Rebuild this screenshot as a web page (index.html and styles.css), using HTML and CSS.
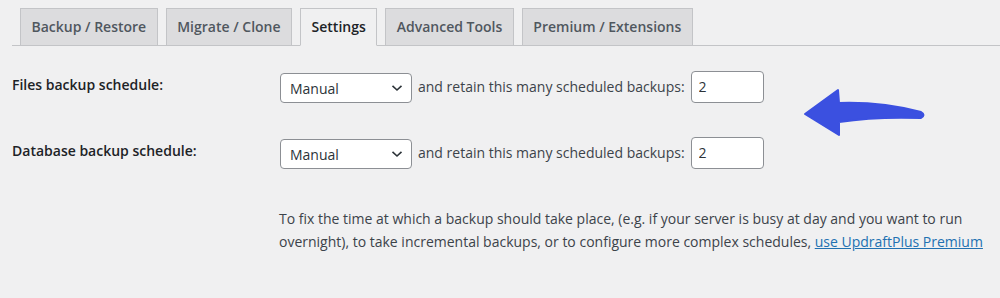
FILE: index.html
```html
<!DOCTYPE html>
<html lang="en">
<head>
  <meta charset="UTF-8">
  <meta name="viewport" content="width=device-width, initial-scale=1.0">
  <title>UpdraftPlus Settings</title>
  <link rel="stylesheet" href="styles.css">
</head>
<body>

  <div class="wrap">
    <!-- Tabs -->
    <nav class="nav-tabs">
      <a class="nav-tab" href="#">Backup / Restore</a>
      <a class="nav-tab" href="#">Migrate / Clone</a>
      <a class="nav-tab active" href="#">Settings</a>
      <a class="nav-tab" href="#">Advanced Tools</a>
      <a class="nav-tab" href="#">Premium / Extensions</a>
    </nav>

    <div class="settings">
      <div class="row">
        <label class="row-label" for="filesSchedule">Files backup schedule:</label>
        <div class="row-controls">
          <select id="filesSchedule" class="schedule">
            <option>Manual</option>
            <option>Every 4 hours</option>
            <option>Daily</option>
            <option>Weekly</option>
          </select>
          <span class="retain">and retain this many scheduled backups:</span>
          <input type="number" class="retain-count" value="2">
        </div>
      </div>

      <div class="row">
        <label class="row-label" for="dbSchedule">Database backup schedule:</label>
        <div class="row-controls">
          <select id="dbSchedule" class="schedule">
            <option>Manual</option>
            <option>Every 4 hours</option>
            <option>Daily</option>
            <option>Weekly</option>
          </select>
          <span class="retain">and retain this many scheduled backups:</span>
          <input type="number" class="retain-count" value="2">
        </div>
      </div>

      <p class="note">
        To fix the time at which a backup should take place, (e.g. if your server is busy at day and you want to run overnight), to take incremental backups, or to configure more complex schedules, <a href="#">use UpdraftPlus Premium</a>
      </p>
    </div>

    <!-- Pointer arrow -->
    <svg class="pointer" viewBox="800 84 130 56" width="130" height="56" aria-hidden="true">
      <path d="M805 114 L838 90 L839 103 C868 102 898 106 921 112 Q926 115 921 118 C893 117 865 118 839 122 L839 135 Z"
            fill="#3b50e0" stroke="#3b50e0" stroke-width="2" stroke-linejoin="round"/>
    </svg>
  </div>

</body>
</html>
```

FILE: styles.css
```css
/* Basic reset */
* {
  box-sizing: border-box;
  margin: 0;
  padding: 0;
}

body {
  font-family: 'Open Sans', 'Noto Sans', sans-serif;
  font-size: 14px;
  background-color: #f0f0f1;
  color: #3c434a;
}

.wrap {
  position: relative;
  padding: 8px 0 0 12px;
  height: 298px;
}

/* Tabs */
.nav-tabs {
  display: flex;
  gap: 8px;
  padding-left: 8px;
  border-bottom: 1px solid #c3c4c7;
}

.nav-tab {
  display: block;
  height: 38px;
  margin-bottom: -1px;
  padding: 0 10.5px;
  line-height: 36px;
  font-size: 14px;
  font-weight: 600;
  color: #50575e;
  text-decoration: none;
  background-color: #dcdcde;
  border: 1px solid #c3c4c7;
}

.nav-tab.active {
  background-color: #f0f0f1;
  border-bottom-color: #f0f0f1;
  color: #1d2327;
}

/* Settings rows */
.settings {
  padding-top: 24px;
}

.row {
  display: flex;
  align-items: flex-start;
  margin-bottom: 33px;
}

.row-label {
  width: 268px;
  padding-top: 5px;
  font-weight: 600;
  color: #1d2327;
}

.row-controls {
  display: flex;
  align-items: center;
}

.schedule {
  width: 132px;
  height: 30px;
  margin-top: 3px;
  padding: 0 24px 0 9px;
  font-family: inherit;
  font-size: 14px;
  color: #2c3338;
  background: #fff url("data:image/svg+xml,%3Csvg xmlns='http://www.w3.org/2000/svg' width='12' height='8' viewBox='0 0 12 8'%3E%3Cpath d='M1.5 1.8 6 6 10.5 1.8' fill='none' stroke='%232c3338' stroke-width='1.6'/%3E%3C/svg%3E") no-repeat right 8px center;
  border: 1px solid #8c8f94;
  border-radius: 4px;
  appearance: none;
  -webkit-appearance: none;
}

.retain {
  margin: 0 6px;
}

.retain-count {
  width: 73px;
  height: 32px;
  padding: 0 7px;
  font-family: inherit;
  font-size: 14px;
  color: #2c3338;
  background-color: #fff;
  border: 1px solid #8c8f94;
  border-radius: 4px;
  -moz-appearance: textfield;
}

.retain-count::-webkit-inner-spin-button,
.retain-count::-webkit-outer-spin-button {
  -webkit-appearance: none;
  margin: 0;
}

/* margin collapses with the row's 33px above it */
.note {
  margin: 38px 0 0 267px;
  line-height: 23px;
  color: #3c434a;
}

.note a {
  color: #2271b1;
}

/* Annotation arrow over the page */
.pointer {
  position: absolute;
  left: 800px;
  top: 84px;
}
```
